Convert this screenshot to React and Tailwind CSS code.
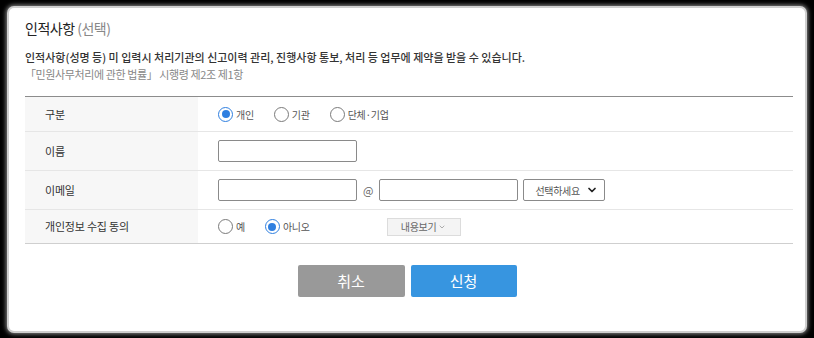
import { ChevronDown } from 'lucide-react';

const font = { fontFamily: '"Noto Sans CJK KR", "Noto Sans", sans-serif' };

function Radio({ checked, label, className = '' }) {
  return (
    <label className={`flex items-center gap-[3px] text-[10px] tracking-[-0.3px] text-[#555] ${className}`}>
      <span
        className={`flex h-[15px] w-[15px] items-center justify-center rounded-full border bg-white ${
          checked ? 'border-[#2f7fe0]' : 'border-[#7a7a7a]'
        }`}
      >
        {checked && <span className="h-[8px] w-[8px] rounded-full bg-[#2f7fe0]" />}
      </span>
      {label}
    </label>
  );
}

function Row({ label, height, children, border = 'border-t border-[#e6e6e6]' }) {
  return (
    <div className={`flex ${border}`} style={{ height }}>
      <div className="flex w-[173px] shrink-0 items-center bg-[#f7f7f7] pl-[20px] text-[11px] tracking-[-0.2px] text-[#333]">
        {label}
      </div>
      <div className="flex flex-1 items-center pl-[20px]">{children}</div>
    </div>
  );
}

const inputCls = 'h-[22px] rounded-[2px] border border-[#8a8a8a] bg-white';

export default function App() {
  return (
    <div className="h-[338px] w-[814px] bg-black pl-[9px] pt-[8px]" style={font}>
      <div className="h-[323px] w-[796px] rounded-[5px] bg-white pl-[16px] pr-[12px] pt-[10px] shadow-[0_0_0_2px_#cfcfcf,0_0_4px_3px_#8a8a8a]">
        <h2 className="h-[20px] text-[14px] leading-[20px] tracking-[-0.5px] text-[#222]">
          인적사항 <span className="text-[#888]">(선택)</span>
        </h2>
        <p className="mt-[11px] text-[11px] leading-[17px] font-medium text-[#333]">
          인적사항(성명 등) 미 입력시 처리기관의 신고이력 관리, 진행사항 통보, 처리 등 업무에 제약을 받을 수 있습니다.
        </p>
        <p className="text-[11px] leading-[17px] tracking-[-0.4px] text-[#888]">「민원사무처리에 관한 법률」 시행령 제2조 제1항</p>

        <div className="mt-[13px] border-b border-[#cfcfcf]">
          <Row label="구분" height={35} border="border-t border-[#8c8c8c]">
            <Radio checked label="개인" />
            <Radio label="기관" className="ml-[20px]" />
            <Radio label="단체·기업" className="ml-[20px]" />
          </Row>
          <Row label="이름" height={39}>
            <div className={`${inputCls} w-[139px]`} />
          </Row>
          <Row label="이메일" height={39}>
            <div className={`${inputCls} w-[139px]`} />
            <span className="mx-[6px] text-[11px] text-[#666]">@</span>
            <div className={`${inputCls} w-[139px]`} />
            <div className={`${inputCls} ml-[5px] flex w-[82px] items-center justify-between pl-[11px] pr-[6px] text-[10px] tracking-[-0.3px] text-[#555]`}>
              선택하세요
              <ChevronDown size={12} strokeWidth={3.5} className="text-[#222]" />
            </div>
          </Row>
          <Row label="개인정보 수집 동의" height={34}>
            <Radio label="예" />
            <Radio checked label="아니오" className="ml-[20px]" />
            <button className="ml-[77px] flex h-[18px] w-[74px] items-center justify-center gap-[2px] border border-[#dcdcdc] bg-[#f4f4f4] text-[10px] tracking-[-0.3px] text-[#666]">
              내용보기
              <ChevronDown size={8} strokeWidth={2} className="text-[#888]" />
            </button>
          </Row>
        </div>

        <div className="mt-[21px] flex justify-center gap-[6px] pr-[4px]">
          <button className="h-[32px] w-[107px] rounded-[2px] bg-[#999999] text-[15px] text-white">취소</button>
          <button className="h-[32px] w-[106px] rounded-[2px] bg-[#3795e0] text-[15px] text-white">신청</button>
        </div>
      </div>
    </div>
  );
}
